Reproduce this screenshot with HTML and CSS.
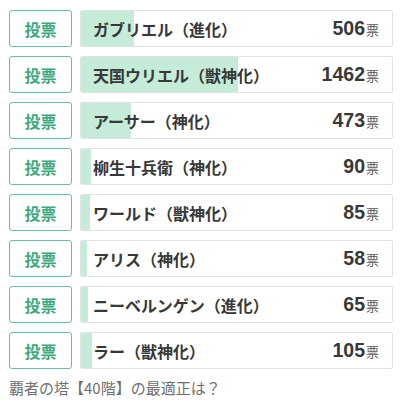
FILE: index.html
```html
<!DOCTYPE html>
<html lang="ja">
<head>
<meta charset="utf-8">
<link rel="stylesheet" href="styles.css">
</head>
<body>
<div class="poll">
  <div class="row"><button class="vote">投票</button><div class="bar"><div class="fill" style="width:17.1%"></div><span class="name">ガブリエル（進化）</span><span class="count">506<small>票</small></span></div></div>
  <div class="row"><button class="vote">投票</button><div class="bar"><div class="fill" style="width:50.5%"></div><span class="name">天国ウリエル（獣神化）</span><span class="count">1462<small>票</small></span></div></div>
  <div class="row"><button class="vote">投票</button><div class="bar"><div class="fill" style="width:16.1%"></div><span class="name">アーサー（神化）</span><span class="count">473<small>票</small></span></div></div>
  <div class="row"><button class="vote">投票</button><div class="bar"><div class="fill" style="width:3.1%"></div><span class="name">柳生十兵衛（神化）</span><span class="count">90<small>票</small></span></div></div>
  <div class="row"><button class="vote">投票</button><div class="bar"><div class="fill" style="width:2.9%"></div><span class="name">ワールド（獣神化）</span><span class="count">85<small>票</small></span></div></div>
  <div class="row"><button class="vote">投票</button><div class="bar"><div class="fill" style="width:2.0%"></div><span class="name">アリス（神化）</span><span class="count">58<small>票</small></span></div></div>
  <div class="row"><button class="vote">投票</button><div class="bar"><div class="fill" style="width:2.2%"></div><span class="name">ニーベルンゲン（進化）</span><span class="count">65<small>票</small></span></div></div>
  <div class="row"><button class="vote">投票</button><div class="bar"><div class="fill" style="width:3.6%"></div><span class="name">ラー（獣神化）</span><span class="count">105<small>票</small></span></div></div>
  <p class="caption">覇者の塔【40階】の最適正は？</p>
</div>
</body>
</html>
```
FILE: styles.css
```css
html, body {
  margin: 0;
  padding: 0;
  background: #fff;
}
body {
  font-family: "Noto Sans CJK JP", "Noto Sans", sans-serif;
}
.poll {
  padding: 10px 7px 0 9px;
  display: flex;
  flex-direction: column;
  gap: 9px;
}
.row {
  display: flex;
  gap: 8px;
  height: 37px;
}
.vote {
  width: 63px;
  flex: none;
  height: 37px;
  box-sizing: border-box;
  border: 1px solid #6cbfa6;
  border-radius: 3px;
  background: #fff;
  color: #3ea97c;
  font-family: "Noto Sans CJK JP", sans-serif;
  font-weight: 700;
  font-size: 16px;
  padding: 0;
  line-height: 1;
}
.bar {
  position: relative;
  flex: 1;
  box-sizing: border-box;
  border: 1px solid #e2e2e2;
  border-radius: 2px;
  display: flex;
  align-items: center;
  justify-content: space-between;
  padding: 0 13px 0 12px;
  overflow: hidden;
}
.fill {
  position: absolute;
  left: 0;
  top: 0;
  bottom: 0;
  background: #c4ecd9;
}
.name {
  position: relative;
  font-size: 16px;
  font-weight: 700;
  color: #383838;
  white-space: nowrap;
}
.count {
  position: relative;
  font-family: "Liberation Sans", "Noto Sans CJK JP", sans-serif;
  font-weight: 700;
  font-size: 19.5px;
  color: #383838;
  white-space: nowrap;
}
.count small {
  font-family: "Noto Sans CJK JP", sans-serif;
  font-weight: 400;
  font-size: 13px;
  color: #555;
  margin-left: 1px;
}
.caption {
  margin: -1px 0 0;
  font-size: 15px;
  color: #707070;
  line-height: 22px;
}
```
